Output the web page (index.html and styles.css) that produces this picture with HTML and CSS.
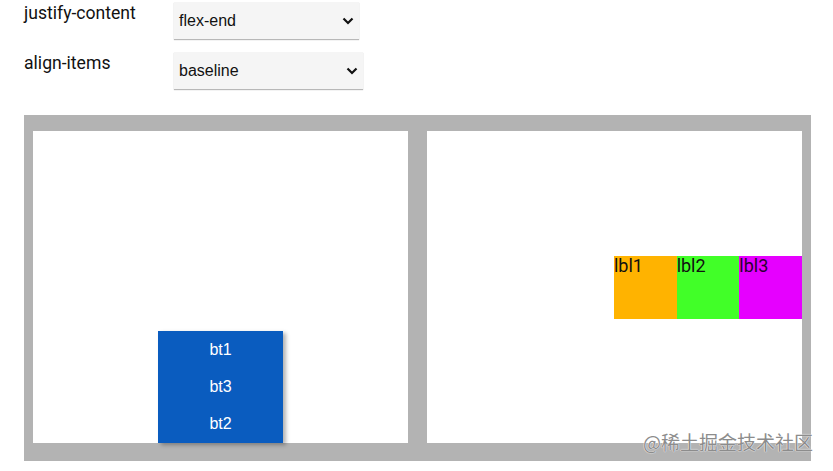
FILE: index.html
```html
<!DOCTYPE html>
<html>
<head>
<meta charset="utf-8">
<link rel="stylesheet" href="styles.css">
</head>
<body>
<div class="controls">
  <div class="row">
    <span class="name">justify-content</span>
    <div class="select w1">
      <span class="val">flex-end</span>
      <svg class="chev" width="12" height="8" viewBox="0 0 12 8"><path d="M1.5 1.5 L6 6 L10.5 1.5" fill="none" stroke="#111" stroke-width="2.2"/></svg>
    </div>
  </div>
  <div class="row">
    <span class="name">align-items</span>
    <div class="select w2">
      <span class="val">baseline</span>
      <svg class="chev" width="12" height="8" viewBox="0 0 12 8"><path d="M1.5 1.5 L6 6 L10.5 1.5" fill="none" stroke="#111" stroke-width="2.2"/></svg>
    </div>
  </div>
</div>
<div class="stage">
  <div class="panel left">
    <div class="btns">
      <div class="btn">bt1</div>
      <div class="btn">bt3</div>
      <div class="btn">bt2</div>
    </div>
  </div>
  <div class="panel right">
    <div class="lbl orange">lbl1</div>
    <div class="lbl green">lbl2</div>
    <div class="lbl magenta">lbl3</div>
  </div>
</div>
<div class="watermark">@稀土掘金技术社区</div>
</body>
</html>
```
FILE: styles.css
```css
html, body {
  margin: 0;
  padding: 0;
  background: #fff;
}
body {
  width: 833px;
  height: 471px;
  position: relative;
  overflow: hidden;
  font-family: Roboto, "Liberation Sans", sans-serif;
}
.controls {
  padding: 2px 0 0 24px;
  display: flex;
  flex-direction: column;
  gap: 13px;
}
.row {
  display: flex;
  align-items: flex-start;
}
.name {
  width: 150px;
  font-size: 17.6px;
  color: #111;
  line-height: 20px;
  margin-top: 1px;
}
.select {
  position: relative;
  height: 37px;
  background: #f5f5f5;
  box-shadow: 0 1px 1px rgba(0,0,0,0.28);
  display: flex;
  align-items: center;
  padding-left: 5px;
  box-sizing: border-box;
  font-family: "Liberation Sans", Arial, sans-serif;
  font-size: 16px;
  color: #111;
}
.w1 { width: 185px; }
.w2 { width: 189px; }
.chev {
  position: absolute;
  right: 5px;
  top: 15px;
}
.stage {
  margin: 26px 0 0 24px;
  width: 787px;
  height: 346px;
  box-sizing: border-box;
  background: #b3b3b3;
  padding: 16px 9px 18px 9px;
  display: flex;
  gap: 19px;
}
.panel {
  width: 375px;
  height: 312px;
  background: #fff;
  display: flex;
}
.panel.left {
  flex-direction: column;
  justify-content: flex-end;
  align-items: center;
}
.btns {
  width: 125px;
  height: 112px;
  background: #0a5cbf;
  box-shadow: 3px 2px 4px rgba(0,0,0,0.3);
  display: flex;
  flex-direction: column;
}
.btn {
  flex: 1;
  color: #fff;
  font-family: "Liberation Sans", Arial, sans-serif;
  font-size: 16px;
  display: flex;
  align-items: center;
  justify-content: center;
}
.panel.right {
  justify-content: flex-end;
  align-items: center;
}
.lbl {
  width: 62.7px;
  height: 63px;
  font-family: Roboto, "Liberation Sans", sans-serif;
  font-size: 18px;
  line-height: 20px;
  color: #111;
}
.orange { background: #ffb300; }
.green { background: #41ff28; }
.magenta { background: #e600ff; color: #2a0030; }
.watermark {
  position: absolute;
  left: 643px;
  top: 430px;
  font-family: "Noto Sans CJK SC", sans-serif;
  font-size: 19px;
  line-height: 24px;
  color: #8c8c8c;
  text-shadow: 0 0 1px #fff, 0 0 1px #fff;
}
```
